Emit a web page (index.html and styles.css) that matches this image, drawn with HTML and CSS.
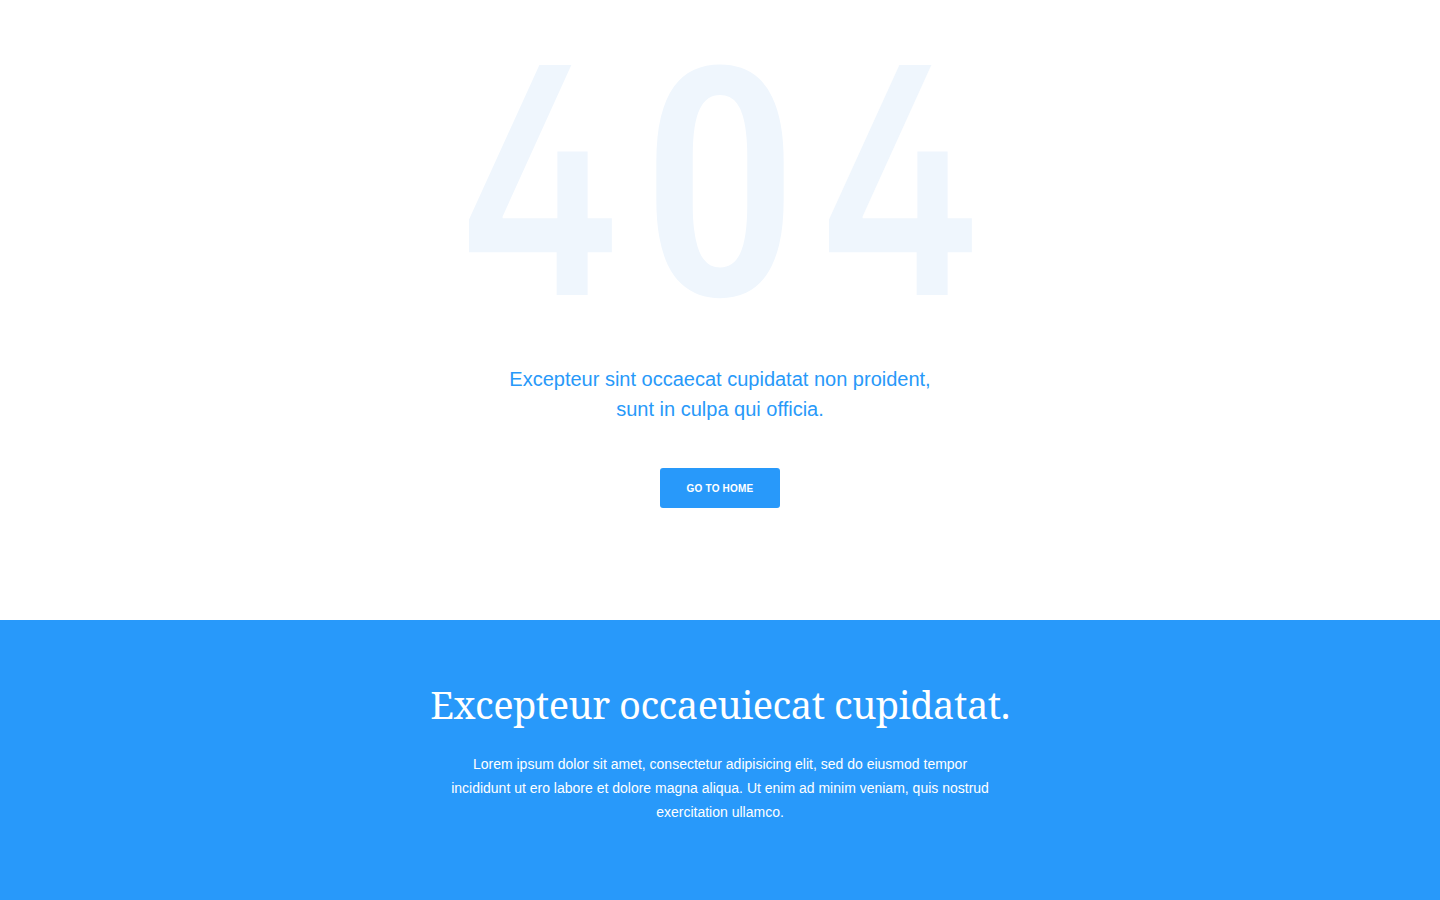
FILE: index.html
```html
<!DOCTYPE html>
<html lang="en">
<head>
<meta charset="utf-8">
<title>404</title>
<link rel="stylesheet" href="styles.css">
</head>
<body>
<main class="error">
  <h1 class="error-code"><span class="digit digit-four">4</span><span class="digit digit-zero">0</span><span class="digit digit-four">4</span></h1>
  <p class="error-text">Excepteur sint occaecat cupidatat non proident,<br>sunt in culpa qui officia.</p>
  <a class="btn" href="#">GO TO HOME</a>
</main>
<section class="promo">
  <h2 class="promo-title">Excepteur occaeuiecat cupidatat.</h2>
  <p class="promo-text">Lorem ipsum dolor sit amet, consectetur adipisicing elit, sed do eiusmod tempor incididunt ut ero labore et dolore magna aliqua. Ut enim ad minim veniam, quis nostrud exercitation ullamco.</p>
</section>
</body>
</html>
```

FILE: styles.css
```css
* { box-sizing: border-box; }
html, body { margin: 0; padding: 0; }
body {
  font-family: "Liberation Sans", Arial, sans-serif;
  background: #ffffff;
}
.error {
  height: 620px;
  display: flex;
  flex-direction: column;
  align-items: center;
  padding-top: 30px;
}
.error-code {
  margin: 0;
  display: flex;
  align-items: baseline;
  justify-content: center;
  color: #eff6fd;
  font-weight: 400;
}
.digit {
  width: 180px;
  display: inline-flex;
  justify-content: center;
  line-height: 300px;
}
.digit-four {
  font-family: Inter, "Noto Sans", sans-serif;
  font-feature-settings: "cv02" 1;
  font-weight: 600;
  font-size: 316px;
  transform: scaleX(0.8);
}
.digit-zero {
  font-family: "Roboto Condensed", Roboto, sans-serif;
  font-weight: 500;
  font-size: 320px;
}
.error-text {
  margin: 28px 0 0;
  font-size: 20px;
  line-height: 30px;
  color: #2899f9;
  text-align: center;
}
.btn {
  margin-top: 44px;
  width: 120px;
  height: 40px;
  display: flex;
  align-items: center;
  justify-content: center;
  background: #2899fa;
  color: #ffffff;
  border-radius: 3px;
  font-size: 10px;
  font-weight: 700;
  text-decoration: none;
  letter-spacing: 0.2px;
}
.promo {
  height: 280px;
  background: #2899fa;
  color: #ffffff;
  display: flex;
  flex-direction: column;
  align-items: center;
  padding-top: 60px;
}
.promo-title {
  margin: 0;
  font-family: "Noto Serif", Georgia, "Liberation Serif", serif;
  font-weight: 400;
  font-size: 38px;
  line-height: 48px;
  letter-spacing: -0.5px;
}
.promo-text {
  margin: 24px 0 0;
  width: 550px;
  font-size: 14px;
  line-height: 24px;
  text-align: center;
}
```
